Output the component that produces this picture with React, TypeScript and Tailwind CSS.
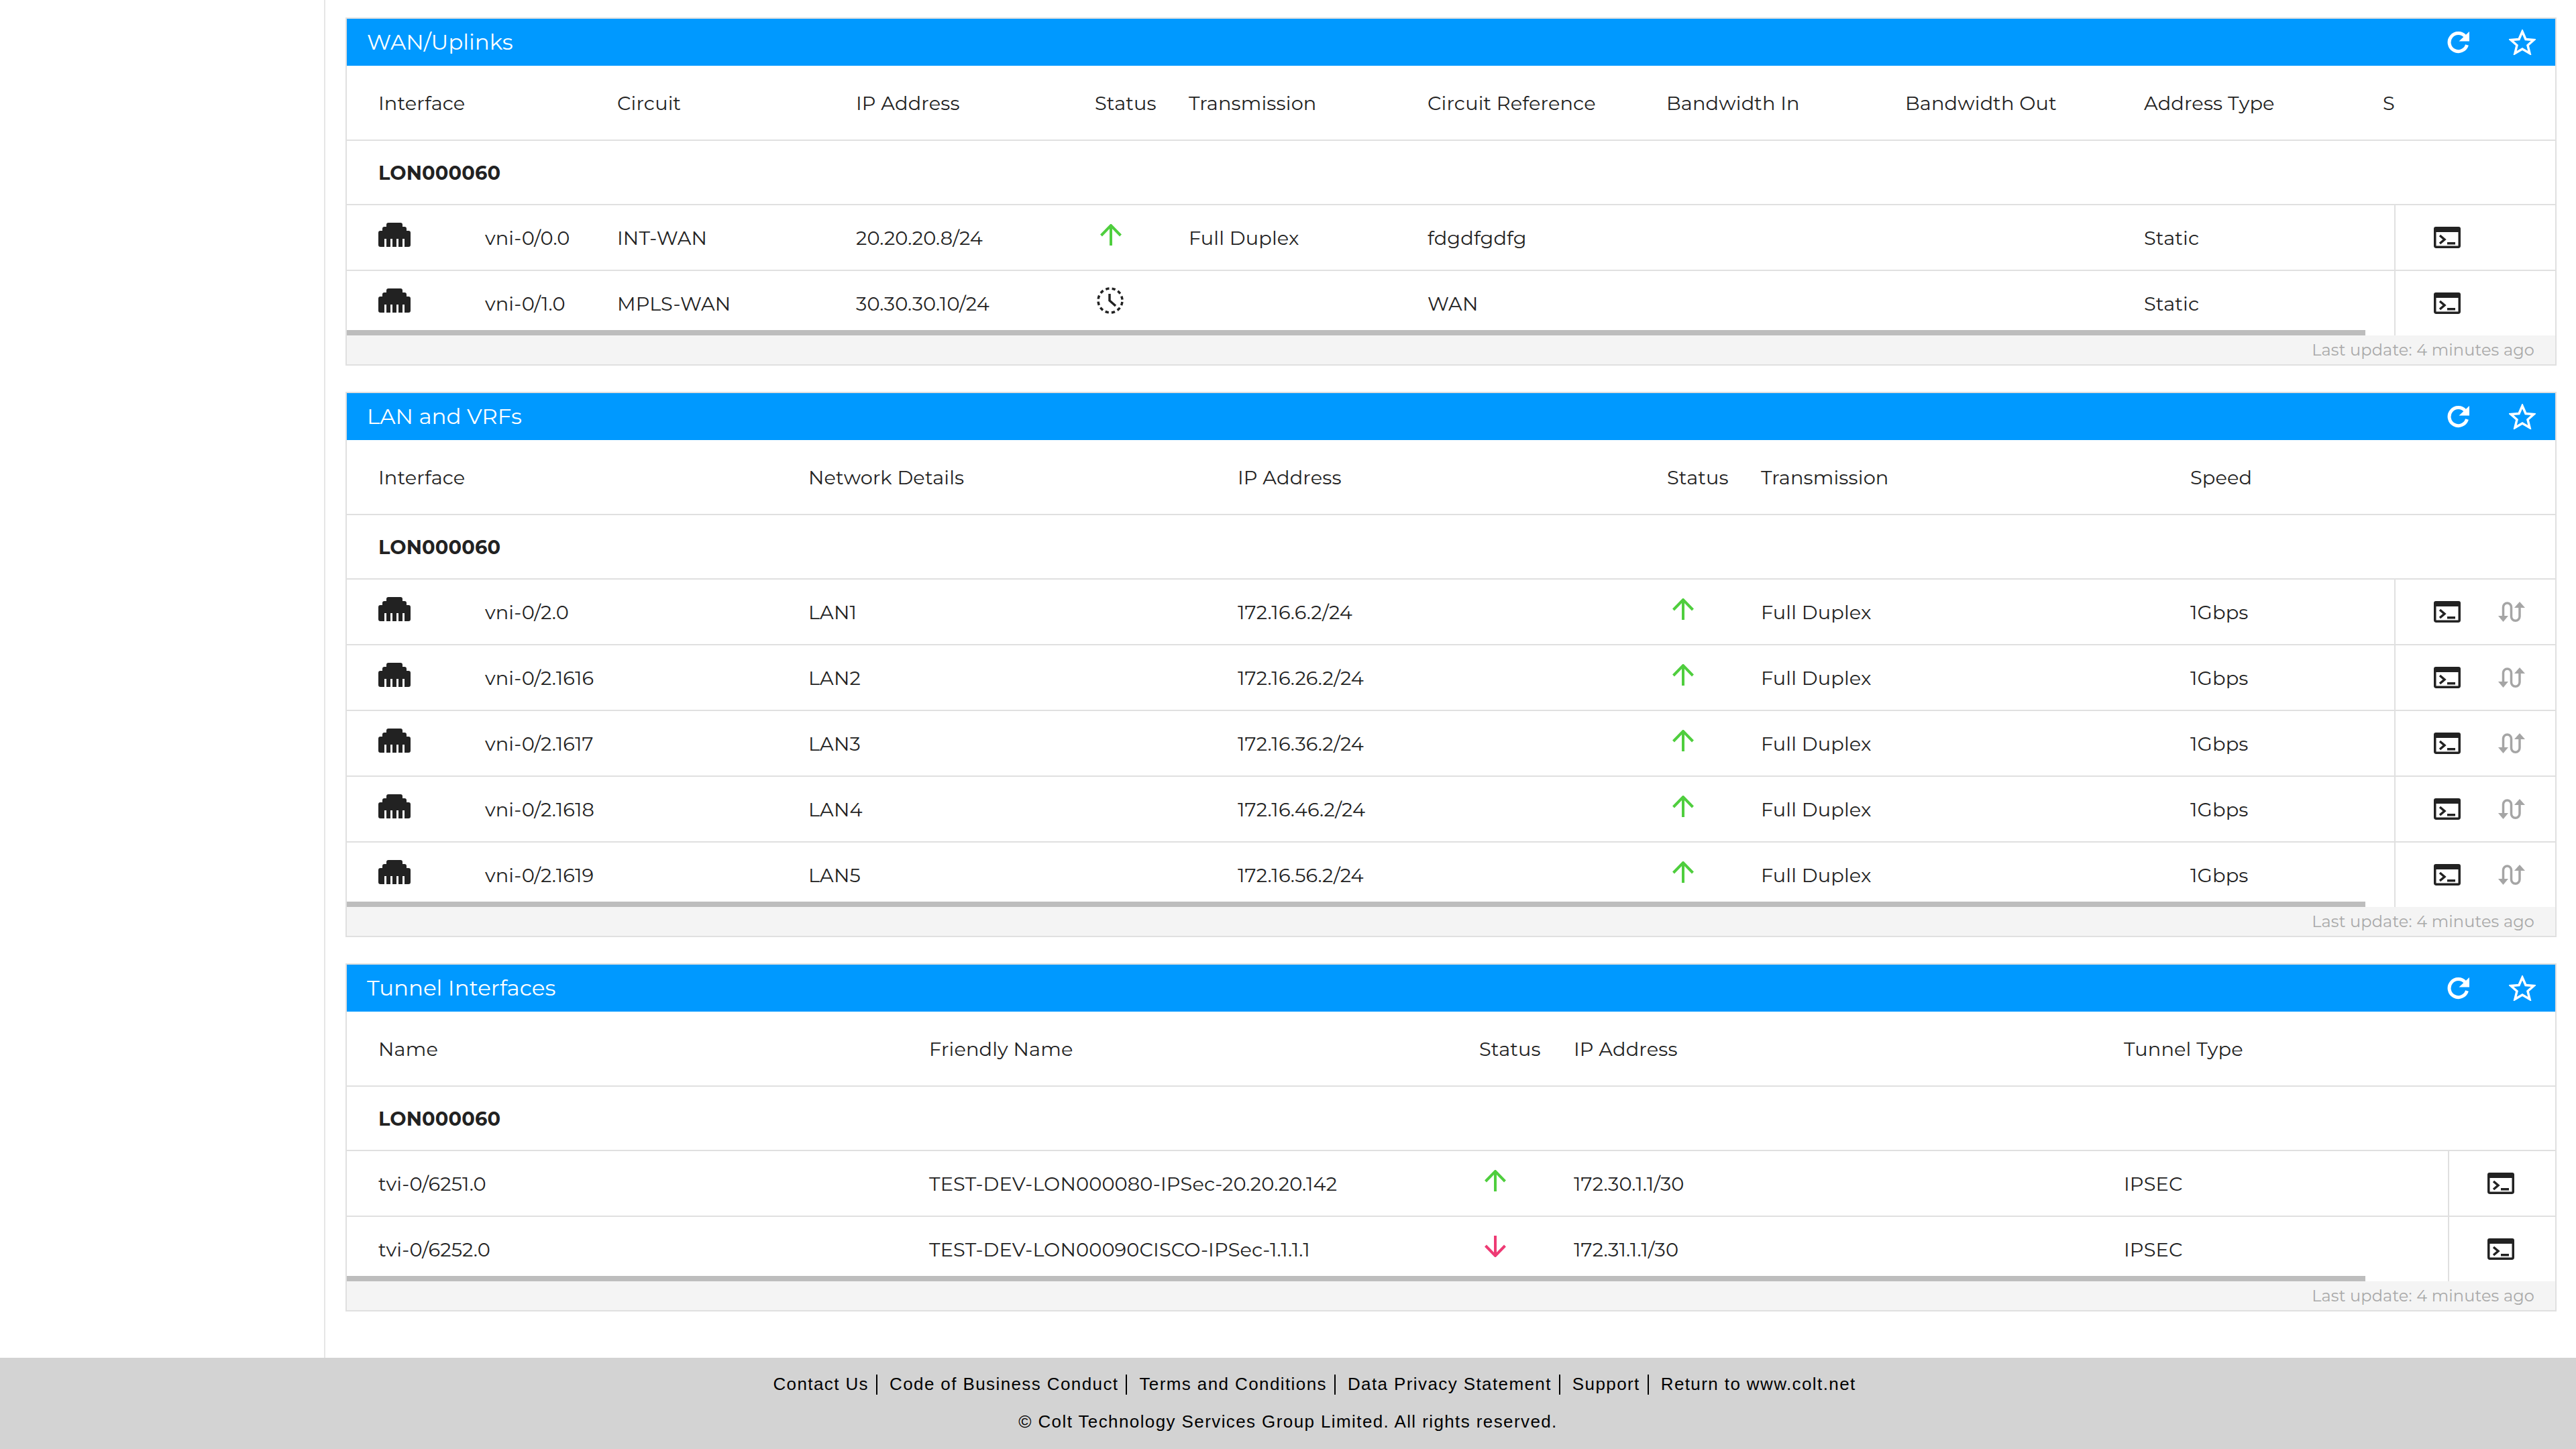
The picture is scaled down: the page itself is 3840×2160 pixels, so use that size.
const FONT = "font-['Montserrat','Inter','Liberation_Sans',sans-serif]";

function Rj45() {
    return (
        <svg width="48" height="36" viewBox="0 0 48 36" className="block -mt-[10px]">
            <path
                fill="#222222"
                fillRule="evenodd"
                d="M15 0h18a3 3 0 0 1 3 3v3h3a3 3 0 0 1 3 3v3h3a3 3 0 0 1 3 3v18a3 3 0 0 1-3 3h-6V24h-3v12h-6V24h-3v12h-6V24h-3v12h-6V24H9v12H3a3 3 0 0 1-3-3V15a3 3 0 0 1 3-3h3V9a3 3 0 0 1 3-3h3V3a3 3 0 0 1 3-3z"
            />
        </svg>
    );
}

function Terminal() {
    return (
        <svg width="40" height="32" viewBox="0 0 40 32" className="block">
            <rect x="1.750" y="4" width="36.500" height="26.250" rx="2" fill="none" stroke="#222222" strokeWidth="3.500" />
            <rect x="0" y="0" width="40" height="8" rx="3" fill="#222222" />
            <path d="M9 13l7 6-7 6" fill="none" stroke="#222222" strokeWidth="3.5" />
            <rect x="20" y="23" width="12" height="3.5" fill="#222222" />
        </svg>
    );
}

function Swap() {
    return (
        <svg width="40" height="30" viewBox="0 0 40 30" className="block">
            <path d="M7.500 23V8a6 6 0 0 1 12 0v14a6 6 0 0 0 12.500 0V8" fill="none" stroke="#a5a5a5" strokeWidth="3.500" />
            <path d="M0 21h15l-7.500 9z" fill="#a5a5a5" />
            <path d="M24 9h16L32 0z" fill="#a5a5a5" />
        </svg>
    );
}

function ArrowUp() {
    return (
        <svg width="32" height="32" viewBox="0 0 32 32" className="block -mt-[10px]">
            <path d="M16 32V2M1.500 17L16 2l14.500 15" fill="none" stroke="#4fce3e" strokeWidth="4" />
        </svg>
    );
}

function ArrowDown() {
    return (
        <svg width="32" height="32" viewBox="0 0 32 32" className="block -mt-[10px]">
            <path d="M16 0v30M1.500 15L16 30l14.500-15" fill="none" stroke="#ee3a74" strokeWidth="4" />
        </svg>
    );
}

function ClockIcon() {
    return (
        <svg width="40" height="40" viewBox="0 0 40 40" className="block -mt-[10px]">
            <circle cx="20" cy="20" r="18" fill="none" stroke="#222222" strokeWidth="3.500" strokeDasharray="5.200 4.225" strokeDashoffset="-2.110" />
            <path d="M19 10v10l9 8" fill="none" stroke="#222222" strokeWidth="3.500" />
        </svg>
    );
}

function Refresh() {
    return (
        <svg width="34" height="33" viewBox="0 0 34 33" className="block">
            <path d="M27 7.500A13.500 13.500 0 1 0 29.500 20" fill="none" stroke="white" strokeWidth="5" />
            <path d="M33 0v14.500H17.500z" fill="white" />
        </svg>
    );
}

function Star() {
    return (
        <svg width="40" height="38" viewBox="0 0 40 38" className="block">
            <polygon
                points="20,3 25,14.500 37,15.500 28,23.500 31,35.500 20,29 9,35.500 12,23.500 3,15.500 15,14.500"
                fill="none"
                stroke="white"
                strokeWidth="3.500"
            />
        </svg>
    );
}

type Cell = React.ReactNode;

interface PanelProps {
    title: string;
    columns: string;
    headers: string[];
    rows: Cell[][];
    actionWidth: string;
    swap?: boolean;
}

function Panel({ title, columns, headers, rows, actionWidth, swap }: PanelProps) {
    return (
        <section className="border-2 border-[#e0e0e0]">
            <div className="h-[70px] bg-[#0099ff] flex items-center justify-between pl-[30px] pr-[29px] text-white">
                <span className="text-[32.5px] tracking-normal">{title}</span>
                <div className="flex items-center gap-[58px]">
                    <Refresh />
                    <Star />
                </div>
            </div>
            <div className="relative">
                <div className={`h-[112px] pl-[47px] pt-[2px] border-b-2 border-[#e0e0e0] grid items-center ${columns}`}>
                    {headers.map((h) => (
                        <div key={h} className="whitespace-nowrap">{h}</div>
                    ))}
                </div>
                <div className="h-[96px] pl-[47px] pt-[2px] border-b-2 border-[#e0e0e0] flex items-center font-bold">LON000060</div>
                {rows.map((row, i) => (
                    <div key={i} className={`flex ${i < rows.length - 1 ? 'h-[98px] border-b-2 border-[#e0e0e0]' : 'h-[96px]'}`}>
                        <div className={`flex-1 min-w-0 pl-[47px] pt-[2px] grid items-center ${columns}`}>
                            {row.map((cell, j) => (
                                <div key={j} className="whitespace-nowrap">{cell}</div>
                            ))}
                        </div>
                        <div className={`${actionWidth} shrink-0 border-l-2 border-[#e0e0e0] flex items-center pl-[57px] gap-[56px]`}>
                            <Terminal />
                            {swap && <Swap />}
                        </div>
                    </div>
                ))}
                <div className="absolute left-0 bottom-0 w-[3009px] h-[8px] bg-[#bdbdbd]" />
            </div>
            <div className="h-[43px] bg-[#f4f4f4] flex items-center justify-end pr-[31px] text-[24px] text-[#a9a9a9]">
                Last update: 4 minutes ago
            </div>
        </section>
    );
}

function Iface({ name }: { name: string }) {
    return (
        <div className="flex items-center">
            <div className="w-[159px]"><Rj45 /></div>
            <span>{name}</span>
        </div>
    );
}

const Up = <div className="pl-[8px]"><ArrowUp /></div>;
const Down = <div className="pl-[8px]"><ArrowDown /></div>;

const wanRows: Cell[][] = [
    [<Iface name="vni-0/0.0" />, 'INT-WAN', '20.20.20.8/24', Up, 'Full Duplex', 'fdgdfgdfg', '', '', 'Static', ''],
    [<Iface name="vni-0/1.0" />, 'MPLS-WAN', '30.30.30.10/24', <div className="pl-[3px]"><ClockIcon /></div>, '', 'WAN', '', '', 'Static', ''],
];

const lanRows: Cell[][] = [
    ['vni-0/2.0', 'LAN1', '172.16.6.2/24'],
    ['vni-0/2.1616', 'LAN2', '172.16.26.2/24'],
    ['vni-0/2.1617', 'LAN3', '172.16.36.2/24'],
    ['vni-0/2.1618', 'LAN4', '172.16.46.2/24'],
    ['vni-0/2.1619', 'LAN5', '172.16.56.2/24'],
].map(([name, net, ip]) => [<Iface name={name} />, net, ip, Up, 'Full Duplex', '1Gbps']);

const tunnelRows: Cell[][] = [
    ['tvi-0/6251.0', 'TEST-DEV-LON000080-IPSec-20.20.20.142', Up, '172.30.1.1/30', 'IPSEC'],
    ['tvi-0/6252.0', 'TEST-DEV-LON00090CISCO-IPSec-1.1.1.1', Down, '172.31.1.1/30', 'IPSEC'],
];

const links = ['Contact Us', 'Code of Business Conduct', 'Terms and Conditions', 'Data Privacy Statement', 'Support'];

export default function App() {
    return (
        <div className={`w-[3840px] h-[2160px] bg-white flex flex-col text-[#222222] text-[28.8px] tracking-[0.15px] overflow-hidden ${FONT}`}>
            <div className="flex-1 flex min-h-0">
                <aside className="w-[485px] border-r-2 border-[#e6e6e6] shrink-0" />
                <main className="flex-1 min-w-0 pt-[26px] pl-[30px] pr-[29px] flex flex-col gap-[39px]">
                    <Panel
                        title="WAN/Uplinks"
                        columns="grid-cols-[356px_356px_356px_140px_356px_356px_356px_356px_356px_100px]"
                        headers={['Interface', 'Circuit', 'IP Address', 'Status', 'Transmission', 'Circuit Reference', 'Bandwidth In', 'Bandwidth Out', 'Address Type', 'S']}
                        rows={wanRows}
                        actionWidth="w-[240px]"
                    />
                    <Panel
                        title="LAN and VRFs"
                        columns="grid-cols-[641px_640px_640px_140px_640px_100px]"
                        headers={['Interface', 'Network Details', 'IP Address', 'Status', 'Transmission', 'Speed']}
                        rows={lanRows}
                        actionWidth="w-[240px]"
                        swap
                    />
                    <Panel
                        title="Tunnel Interfaces"
                        columns="grid-cols-[821px_820px_141px_820px_200px]"
                        headers={['Name', 'Friendly Name', 'Status', 'IP Address', 'Tunnel Type']}
                        rows={tunnelRows}
                        actionWidth="w-[160px]"
                    />
                </main>
            </div>
            <footer className="h-[136px] bg-[#d3d3d3] shrink-0 text-black text-[26px] tracking-[1.4px] font-['Liberation_Sans',Arial,sans-serif] flex flex-col items-center pt-[20px] gap-[17px]">
                <div className="flex items-center ml-[79px]">
                    {links.map((l) => (
                        <span key={l} className="flex items-center">
                            {l}
                            <span className="inline-block w-[2px] h-[30px] bg-black ml-[11px] mr-[18px]" />
                        </span>
                    ))}
                    <span>Return to www.colt.net</span>
                </div>
                <div>© Colt Technology Services Group Limited. All rights reserved.</div>
            </footer>
        </div>
    );
}
